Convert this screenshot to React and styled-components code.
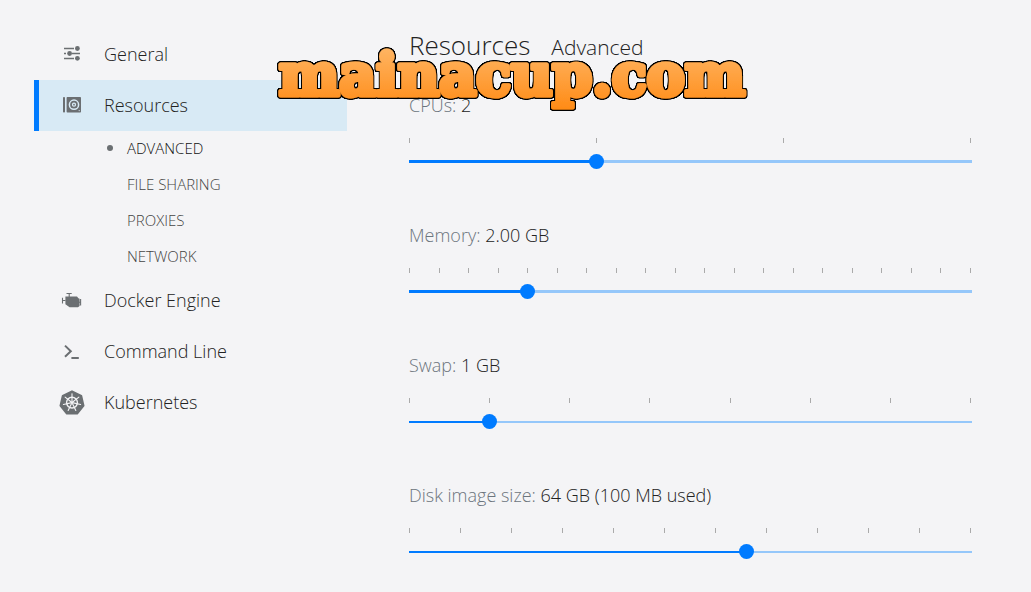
import React, { useState } from "react";
import styled, { createGlobalStyle } from "styled-components";

const GeneralIcon = () => (
  <Icon viewBox="0 0 26 25" aria-hidden="true">
    <path
      d="M5 6.5h10M5 11.5h2M13 11.5h8M5 16.5h10"
      stroke="currentColor"
      strokeWidth="1.3"
    />
    <circle cx="18.4" cy="6.5" r="2.4" />
    <circle cx="10.6" cy="11.5" r="2.4" />
    <circle cx="18.4" cy="16.3" r="2.4" />
  </Icon>
);

const ResourcesIcon = () => (
  <Icon viewBox="0 0 26 25" aria-hidden="true">
    <rect x="4" y="4" width="2" height="15.5" rx="0.8" />
    <rect x="7.6" y="4" width="14.4" height="15.5" rx="0.8" />
    <circle cx="15" cy="11.7" r="4.6" fill="none" stroke="#d8eaf5" strokeWidth="1.5" />
    <circle cx="15" cy="11.7" r="1.5" fill="none" stroke="#d8eaf5" strokeWidth="1.3" />
    <circle cx="20.2" cy="17.6" r="0.6" fill="#d8eaf5" />
  </Icon>
);

const EngineIcon = () => (
  <Icon viewBox="0 0 26 25" aria-hidden="true">
    <path d="M6.4 8.6H18l1.4 1.6 1.2.5v7.4l-1.6 1.1h-8.4l-4.2-3z" />
    <path
      d="M7.5 5.5h5.2M10.2 5.5v3.4M3.5 9.8v5.6M3.5 12.5h3M19.5 14.2h2M21.6 11v6.4"
      fill="none"
      stroke="currentColor"
      strokeWidth="1.1"
    />
  </Icon>
);

const CommandIcon = () => (
  <Icon viewBox="0 0 26 25" aria-hidden="true">
    <path
      d="M6 6.6l5.8 5.6L6 17.8M12.4 19h7.4"
      fill="none"
      stroke="currentColor"
      strokeWidth="2"
    />
  </Icon>
);

const KubernetesIcon = () => (
  <Icon viewBox="0 0 26 25" aria-hidden="true">
    <path
      d="M13 1.2l9.3 4.5 2.3 10-6.4 7.9H7.8l-6.4-7.9 2.3-10z"
      stroke="currentColor"
      strokeWidth="1.8"
      strokeLinejoin="round"
    />
    <g fill="none" stroke="#f4f4f6">
      <circle cx="13" cy="12.6" r="5.4" strokeWidth="1.4" />
      {[0, 1, 2, 3, 4, 5, 6].map((n) => (
        <path
          key={n}
          d="M13 11.3V3.8"
          strokeWidth="1.1"
          strokeLinecap="round"
          transform={`rotate(${(n * 360) / 7} 13 12.6)`}
        />
      ))}
    </g>
    <circle cx="13" cy="12.6" r="1.3" fill="#f4f4f6" />
  </Icon>
);

const menuList = [
  { id: 1, title: "General", icon: <GeneralIcon /> },
  {
    id: 2,
    title: "Resources",
    icon: <ResourcesIcon />,
    sub: ["ADVANCED", "FILE SHARING", "PROXIES", "NETWORK"],
  },
  { id: 3, title: "Docker Engine", icon: <EngineIcon /> },
  { id: 4, title: "Command Line", icon: <CommandIcon /> },
  { id: 5, title: "Kubernetes", icon: <KubernetesIcon /> },
];

const sliderList = [
  {
    id: "cpus",
    title: "CPUs:",
    min: 1,
    max: 4,
    step: 1,
    start: 2,
    ticks: 4,
    track: 3,
    format: (v) => `${v}`,
  },
  {
    id: "memory",
    title: "Memory:",
    min: 1,
    max: 5.75,
    step: 0.25,
    start: 2,
    ticks: 20,
    track: 3,
    format: (v) => `${v.toFixed(2)} GB`,
  },
  {
    id: "swap",
    title: "Swap:",
    min: 0,
    max: 7,
    step: 1,
    start: 1,
    ticks: 8,
    track: 2,
    format: (v) => `${v} GB`,
  },
  {
    id: "disk",
    title: "Disk image size:",
    min: 16,
    max: 96,
    step: 1,
    start: 64,
    ticks: 12,
    track: 2,
    format: (v) => `${v} GB (100 MB used)`,
  },
];

const ResourceSlider = ({ item }) => {
  const [value, setValue] = useState(item.start);
  const percent = ((value - item.min) / (item.max - item.min)) * 100;

  return (
    <SliderBox>
      <SliderLabel htmlFor={item.id}>
        {item.title} <SliderValue>{item.format(value)}</SliderValue>
      </SliderLabel>
      <TickRow>
        {Array.from({ length: item.ticks }, (_, i) => (
          <Tick key={i} />
        ))}
      </TickRow>
      <Track
        $height={item.track}
        style={{ "--fill": `${percent}%` }}
      >
        <RangeInput
          type="range"
          id={item.id}
          min={item.min}
          max={item.max}
          step={item.step}
          value={value}
          onChange={(e) => setValue(Number(e.target.value))}
        />
      </Track>
    </SliderBox>
  );
};

const App = () => {
  const [menu, setMenu] = useState("Resources");
  const [subMenu, setSubMenu] = useState("ADVANCED");

  return (
    <>
      <GlobalStyle />
      <Settings>
        <SideNav>
          {menuList.map((item) => (
            <div key={item.id}>
              <MenuButton
                type="button"
                $active={menu === item.title}
                onClick={() => setMenu(item.title)}
              >
                {item.icon}
                <MenuText>{item.title}</MenuText>
              </MenuButton>
              {item.sub?.map((name) => (
                <SubButton
                  key={name}
                  type="button"
                  $active={subMenu === name}
                  onClick={() => setSubMenu(name)}
                >
                  {name}
                </SubButton>
              ))}
            </div>
          ))}
        </SideNav>
        <Content>
          <ContentHeader>
            <Title>Resources</Title>
            <SubTitle>Advanced</SubTitle>
          </ContentHeader>
          {sliderList.map((item) => (
            <ResourceSlider key={item.id} item={item} />
          ))}
        </Content>
        <Watermark viewBox="0 0 484 84">
          <defs>
            <linearGradient id="orange" x1="0" y1="8" x2="0" y2="70" gradientUnits="userSpaceOnUse">
              <stop offset="0" stopColor="#ffb461" />
              <stop offset="1" stopColor="#ff8a14" />
            </linearGradient>
            <filter id="outline" x="-5%" y="-10%" width="110%" height="120%">
              <feMorphology in="SourceAlpha" operator="dilate" radius="1" />
              <feGaussianBlur stdDeviation="0.5" />
              <feComponentTransfer result="edge">
                <feFuncA type="linear" slope="2" />
              </feComponentTransfer>
              <feMerge>
                <feMergeNode in="edge" />
                <feMergeNode in="SourceGraphic" />
              </feMerge>
            </filter>
          </defs>
          <WatermarkText x="242" y="54" textAnchor="middle">
            mainacup.com
          </WatermarkText>
        </Watermark>
      </Settings>
    </>
  );
};

export default App;

const GlobalStyle = createGlobalStyle`
  body {
    margin: 0;
    background-color: #f4f4f6;
    font-family: "Open Sans", "Noto Sans", sans-serif;
    font-weight: 300;
    color: #222;
  }

  button {
    font: inherit;
    border: 0;
    background: none;
    cursor: pointer;
  }
`;

const Settings = styled.div`
  position: relative;
  display: flex;
  min-height: 100vh;
  box-sizing: border-box;
  padding: 29px 59px 0 34px;
`;

const SideNav = styled.nav`
  flex: 0 0 313px;
`;

const Icon = styled.svg`
  width: 26px;
  height: 25px;
  color: #6b6f72;
  fill: currentColor;
`;

const MenuButton = styled.button`
  display: flex;
  align-items: center;
  gap: 19px;
  width: 100%;
  height: 51px;
  padding: 0 20px;
  font-size: 18px;
  color: #222;

  && {
    border-left: 5px solid ${(props) => (props.$active ? "#007bff" : "transparent")};
    background-color: ${(props) => (props.$active ? "#d8eaf5" : "transparent")};
  }
`;

const MenuText = styled.span`
  padding-bottom: 2px;
`;

const SubButton = styled.button`
  display: flex;
  align-items: center;
  width: 100%;
  height: 36px;
  padding: 0 0 2px 73px;
  font-size: 15px;
  color: ${(props) => (props.$active ? "#111" : "#444")};

  &::before {
    content: "";
    width: 6px;
    height: 6px;
    margin-right: 14px;
    border-radius: 50%;
    background-color: ${(props) => (props.$active ? "#6b6f72" : "transparent")};
  }
`;

const Content = styled.main`
  flex: 1;
  min-width: 0;
  padding-left: 62px;
`;

const ContentHeader = styled.header`
  display: flex;
  align-items: baseline;
  gap: 21px;
  margin-bottom: 30px;
`;

const Title = styled.h1`
  margin: 0;
  font-size: 26px;
  font-weight: 300;
  line-height: 32px;
`;

const SubTitle = styled.h2`
  margin: 0;
  font-size: 21px;
  font-weight: 300;
  line-height: 32px;
`;

const SliderBox = styled.div`
  margin-bottom: 54px;
`;

const SliderLabel = styled.label`
  display: block;
  font-size: 18px;
  line-height: 24px;
  color: #6c757d;
`;

const SliderValue = styled.span`
  color: #222;
`;

const TickRow = styled.div`
  display: flex;
  justify-content: space-between;
  margin: 21px 1px 11px 0;
`;

const Tick = styled.span`
  width: 1px;
  height: 5px;
  background-color: #aaa;
`;

const Track = styled.div`
  height: 15px;
  background: linear-gradient(
      to right,
      #007bff var(--fill),
      #95c7fa var(--fill)
    )
    center / 100% ${(props) => props.$height}px no-repeat;
`;

/* wider than the track by one thumb, so the thumb centre reaches both ends */
const RangeInput = styled.input`
  display: block;
  width: calc(100% + 14px);
  height: 15px;
  margin: 0 -7px;
  appearance: none;
  background: transparent;
  cursor: pointer;

  &::-webkit-slider-thumb {
    appearance: none;
    width: 15px;
    height: 15px;
    border-radius: 50%;
    background-color: #007bff;
  }
`;

const Watermark = styled.svg`
  position: absolute;
  top: 41px;
  left: 270px;
  width: 484px;
  height: 84px;
  pointer-events: none;
`;

const WatermarkText = styled.text`
  font-family: "DejaVu Serif", serif;
  font-size: 57px;
  font-weight: 700;
  fill: url(#orange);
  stroke: url(#orange);
  stroke-width: 5px;
  stroke-linejoin: round;
  filter: url(#outline);
`;
